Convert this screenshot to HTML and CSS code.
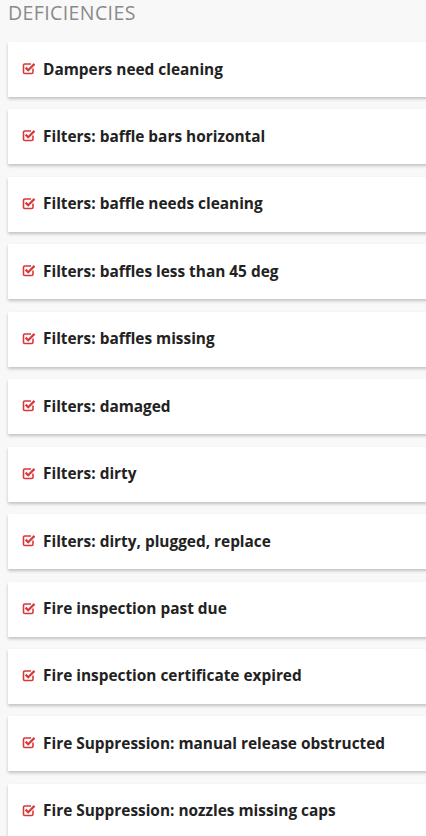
FILE: index.html
```html
<!DOCTYPE html>
<html>
<head>
<meta charset="utf-8">
<link rel="stylesheet" href="styles.css">
</head>
<body>
<div class="page">
  <h2 class="heading">DEFICIENCIES</h2>
  <ul class="list">
    <li class="card"><svg class="ico" viewBox="0 0 14 14"><path d="M11 7.5V11.2a1.3 1.3 0 0 1-1.3 1.3H2.8a1.3 1.3 0 0 1-1.3-1.3V4.3A1.3 1.3 0 0 1 2.8 3H9" fill="none" stroke="#d9383a" stroke-width="1.6"/><path d="M3.6 6.6l2.6 2.6 6.3-6.3" fill="none" stroke="#d9383a" stroke-width="2.2"/></svg><span>Dampers need cleaning</span></li>
    <li class="card"><svg class="ico" viewBox="0 0 14 14"><path d="M11 7.5V11.2a1.3 1.3 0 0 1-1.3 1.3H2.8a1.3 1.3 0 0 1-1.3-1.3V4.3A1.3 1.3 0 0 1 2.8 3H9" fill="none" stroke="#d9383a" stroke-width="1.6"/><path d="M3.6 6.6l2.6 2.6 6.3-6.3" fill="none" stroke="#d9383a" stroke-width="2.2"/></svg><span>Filters: baffle bars horizontal</span></li>
    <li class="card"><svg class="ico" viewBox="0 0 14 14"><path d="M11 7.5V11.2a1.3 1.3 0 0 1-1.3 1.3H2.8a1.3 1.3 0 0 1-1.3-1.3V4.3A1.3 1.3 0 0 1 2.8 3H9" fill="none" stroke="#d9383a" stroke-width="1.6"/><path d="M3.6 6.6l2.6 2.6 6.3-6.3" fill="none" stroke="#d9383a" stroke-width="2.2"/></svg><span>Filters: baffle needs cleaning</span></li>
    <li class="card"><svg class="ico" viewBox="0 0 14 14"><path d="M11 7.5V11.2a1.3 1.3 0 0 1-1.3 1.3H2.8a1.3 1.3 0 0 1-1.3-1.3V4.3A1.3 1.3 0 0 1 2.8 3H9" fill="none" stroke="#d9383a" stroke-width="1.6"/><path d="M3.6 6.6l2.6 2.6 6.3-6.3" fill="none" stroke="#d9383a" stroke-width="2.2"/></svg><span>Filters: baffles less than 45 deg</span></li>
    <li class="card"><svg class="ico" viewBox="0 0 14 14"><path d="M11 7.5V11.2a1.3 1.3 0 0 1-1.3 1.3H2.8a1.3 1.3 0 0 1-1.3-1.3V4.3A1.3 1.3 0 0 1 2.8 3H9" fill="none" stroke="#d9383a" stroke-width="1.6"/><path d="M3.6 6.6l2.6 2.6 6.3-6.3" fill="none" stroke="#d9383a" stroke-width="2.2"/></svg><span>Filters: baffles missing</span></li>
    <li class="card"><svg class="ico" viewBox="0 0 14 14"><path d="M11 7.5V11.2a1.3 1.3 0 0 1-1.3 1.3H2.8a1.3 1.3 0 0 1-1.3-1.3V4.3A1.3 1.3 0 0 1 2.8 3H9" fill="none" stroke="#d9383a" stroke-width="1.6"/><path d="M3.6 6.6l2.6 2.6 6.3-6.3" fill="none" stroke="#d9383a" stroke-width="2.2"/></svg><span>Filters: damaged</span></li>
    <li class="card"><svg class="ico" viewBox="0 0 14 14"><path d="M11 7.5V11.2a1.3 1.3 0 0 1-1.3 1.3H2.8a1.3 1.3 0 0 1-1.3-1.3V4.3A1.3 1.3 0 0 1 2.8 3H9" fill="none" stroke="#d9383a" stroke-width="1.6"/><path d="M3.6 6.6l2.6 2.6 6.3-6.3" fill="none" stroke="#d9383a" stroke-width="2.2"/></svg><span>Filters: dirty</span></li>
    <li class="card"><svg class="ico" viewBox="0 0 14 14"><path d="M11 7.5V11.2a1.3 1.3 0 0 1-1.3 1.3H2.8a1.3 1.3 0 0 1-1.3-1.3V4.3A1.3 1.3 0 0 1 2.8 3H9" fill="none" stroke="#d9383a" stroke-width="1.6"/><path d="M3.6 6.6l2.6 2.6 6.3-6.3" fill="none" stroke="#d9383a" stroke-width="2.2"/></svg><span>Filters: dirty, plugged, replace</span></li>
    <li class="card"><svg class="ico" viewBox="0 0 14 14"><path d="M11 7.5V11.2a1.3 1.3 0 0 1-1.3 1.3H2.8a1.3 1.3 0 0 1-1.3-1.3V4.3A1.3 1.3 0 0 1 2.8 3H9" fill="none" stroke="#d9383a" stroke-width="1.6"/><path d="M3.6 6.6l2.6 2.6 6.3-6.3" fill="none" stroke="#d9383a" stroke-width="2.2"/></svg><span>Fire inspection past due</span></li>
    <li class="card"><svg class="ico" viewBox="0 0 14 14"><path d="M11 7.5V11.2a1.3 1.3 0 0 1-1.3 1.3H2.8a1.3 1.3 0 0 1-1.3-1.3V4.3A1.3 1.3 0 0 1 2.8 3H9" fill="none" stroke="#d9383a" stroke-width="1.6"/><path d="M3.6 6.6l2.6 2.6 6.3-6.3" fill="none" stroke="#d9383a" stroke-width="2.2"/></svg><span>Fire inspection certificate expired</span></li>
    <li class="card"><svg class="ico" viewBox="0 0 14 14"><path d="M11 7.5V11.2a1.3 1.3 0 0 1-1.3 1.3H2.8a1.3 1.3 0 0 1-1.3-1.3V4.3A1.3 1.3 0 0 1 2.8 3H9" fill="none" stroke="#d9383a" stroke-width="1.6"/><path d="M3.6 6.6l2.6 2.6 6.3-6.3" fill="none" stroke="#d9383a" stroke-width="2.2"/></svg><span>Fire Suppression: manual release obstructed</span></li>
    <li class="card"><svg class="ico" viewBox="0 0 14 14"><path d="M11 7.5V11.2a1.3 1.3 0 0 1-1.3 1.3H2.8a1.3 1.3 0 0 1-1.3-1.3V4.3A1.3 1.3 0 0 1 2.8 3H9" fill="none" stroke="#d9383a" stroke-width="1.6"/><path d="M3.6 6.6l2.6 2.6 6.3-6.3" fill="none" stroke="#d9383a" stroke-width="2.2"/></svg><span>Fire Suppression: nozzles missing caps</span></li>
  </ul>
</div>
</body>
</html>
```

FILE: styles.css
```css
html, body {
  margin: 0;
  padding: 0;
  background: #f8f8f8;
  overflow: hidden;
}
.page {
  padding: 0 0 0 8px;
  font-family: "Open Sans", "Liberation Sans", sans-serif;
}
.heading {
  margin: 0;
  padding-top: 0;
  height: 42px;
  box-sizing: border-box;
  font-size: 19.5px;
  font-weight: 400;
  line-height: 25px;
  color: #8a8a8a;
  letter-spacing: 0.4px;
}
.list {
  list-style: none;
  margin: 0;
  padding: 0;
  display: flex;
  flex-direction: column;
  gap: 12.45px;
  margin-right: -20px;
}
.card {
  height: 55px;
  background: #fff;
  box-shadow: 0 2px 3px rgba(0,0,0,0.22);
  display: flex;
  align-items: center;
  padding-left: 14px;
  padding-bottom: 1px;
  box-sizing: border-box;
}
.ico {
  width: 14px;
  height: 14px;
  margin-right: 7px;
  flex: none;
  position: relative;
  top: -1px;
}
.card span {
  font-size: 15.4px;
  font-weight: 700;
  color: #222;
}
```
